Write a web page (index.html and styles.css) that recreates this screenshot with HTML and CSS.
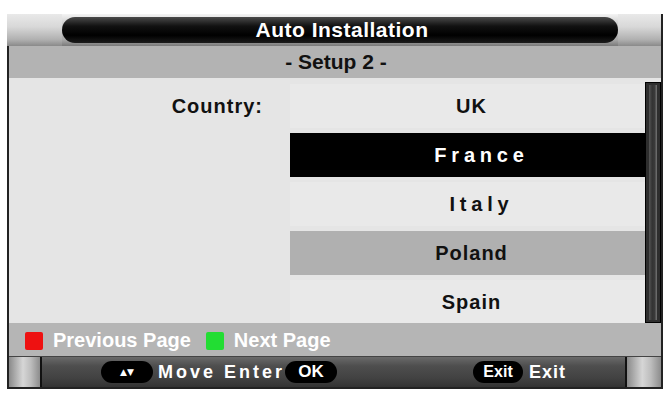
FILE: index.html
```html
<!DOCTYPE html>
<html>
<head>
<meta charset="utf-8">
<link rel="stylesheet" href="styles.css">
</head>
<body>
<div class="tv">
  <div class="titlebar">
    <div class="cap cap-left"></div>
    <div class="pill-title">Auto Installation</div>
    <div class="cap cap-right"></div>
  </div>
  <div class="frame">
    <div class="subtitle">- Setup 2 -</div>
    <div class="content">
      <div class="label">Country:</div>
      <div class="options">
        <div class="opt">UK</div>
        <div class="opt sel wide">France</div>
        <div class="opt wide">Italy</div>
        <div class="opt hl">Poland</div>
        <div class="opt">Spain</div>
      </div>
      <div class="scrollbar"><div class="thumb"></div></div>
    </div>
    <div class="legend">
      <span class="sq red"></span><span class="ltext">Previous Page</span>
      <span class="sq green"></span><span class="ltext">Next Page</span>
    </div>
    <div class="bottombar">
      <div class="bsq"></div>
      <div class="bmid">
        <span class="key arrows">▲▼</span>
        <span class="btext spaced">Move Enter</span>
        <span class="key ok">OK</span>
        <span class="spacer"></span>
        <span class="key exitkey">Exit</span>
        <span class="btext">Exit</span>
      </div>
      <div class="bsq right"></div>
    </div>
  </div>
</div>
</body>
</html>
```
FILE: styles.css
```css
html, body {
  margin: 0;
  padding: 0;
  background: #ffffff;
  width: 667px;
  height: 393px;
  overflow: hidden;
  font-family: "Liberation Sans", Arial, sans-serif;
  font-weight: bold;
}

.tv {
  margin: 14px 0 0 7px;
  width: 656px;
}

.titlebar {
  height: 32px;
  display: flex;
  align-items: center;
  background: linear-gradient(to bottom, #f4f4f4 0%, #cfcfcf 30%, #a8a8a8 80%, #7a7a7a 100%);
  border-right: 2px solid #222;
  box-sizing: border-box;
}

.cap {
  height: 32px;
  background: linear-gradient(to bottom, #e9e9e9 0%, #d8d8d8 40%, #b0b0b0 80%, #8a8a8a 100%);
}
.cap-left { width: 55px; }
.cap-right { width: 43px; }

.pill-title {
  flex: 1;
  height: 26px;
  border-radius: 13px;
  background: linear-gradient(to bottom, #4a4a4a 0%, #111 35%, #000 70%, #1c1c1c 100%);
  color: #fff;
  font-size: 21px;
  letter-spacing: 0.5px;
  display: flex;
  align-items: center;
  justify-content: center;
  padding-left: 4px;
}

.frame {
  border-left: 2px solid #222;
  border-right: 2px solid #222;
}

.subtitle {
  height: 32px;
  background: #b3b3b3;
  color: #111;
  font-size: 21px;
  display: flex;
  align-items: center;
  justify-content: center;
  padding-left: 2px;
}

.content {
  height: 245px;
  overflow: hidden;
  background: #e5e5e5;
  display: grid;
  grid-template-columns: 281px 355px 16px;
  padding-top: 4px;
  box-sizing: border-box;
}

.label {
  margin-top: 2px;
  height: 44px;
  display: flex;
  align-items: center;
  justify-content: flex-end;
  padding-right: 27px;
  font-size: 20px;
  letter-spacing: 1px;
  color: #111;
}

.options {
  display: flex;
  flex-direction: column;
  gap: 5px;
  padding-top: 2px;
}

.opt {
  height: 44px;
  flex: none;
  display: flex;
  align-items: center;
  justify-content: center;
  padding-left: 8px;
  font-size: 20px;
  letter-spacing: 1px;
  color: #111;
  background: #e9e9e9;
}
.opt.wide { letter-spacing: 4.8px; padding-left: 28px; }
.opt.sel { background: #000; color: #fff; }
.opt.hl { background: #b0b0b0; }

.scrollbar {
  height: 241px;
  background: #2e2e2e;
  border: 1px solid #000;
  box-sizing: border-box;
  padding: 2px 3px;
}
.thumb {
  height: 100%;
  background: linear-gradient(to right, #555 0%, #333 40%, #3a3a3a 70%, #777 100%);
}

.legend {
  height: 34px;
  background: #b5b5b5;
  display: flex;
  align-items: center;
  padding-left: 16px;
  border-bottom: 1px solid #444;
  box-sizing: border-box;
}
.sq {
  width: 18px;
  height: 18px;
  border-radius: 2px;
  margin-top: 2px;
}
.red { background: #ee1111; }
.green { background: #22dd33; margin-left: 15px; }
.ltext {
  color: #fff;
  font-size: 20px;
  margin-left: 10px;
  margin-top: 2px;
}

.bottombar {
  height: 30px;
  display: flex;
  background: linear-gradient(to bottom, #6a6a6a 0%, #4e4e4e 30%, #424242 70%, #333 100%);
  border-bottom: 2px solid #222;
}
.bsq {
  width: 31px;
  background: linear-gradient(to right, #8a8a8a 0%, #d6d6d6 45%, #bdbdbd 70%, #8c8c8c 100%);
  border-right: 2px solid #111;
}
.bsq.right {
  width: 34px;
  border-right: none;
  border-left: 2px solid #111;
}
.bmid {
  flex: 1;
  display: flex;
  align-items: center;
  padding-left: 59px;
}
.key {
  height: 22px;
  border-radius: 11px;
  background: #000;
  color: #fff;
  display: flex;
  align-items: center;
  justify-content: center;
  font-size: 16px;
}
.arrows {
  width: 52px;
  font-family: "DejaVu Sans", sans-serif;
  font-size: 9px;
  letter-spacing: 0;
}
.ok { width: 52px; margin-left: 0; font-size: 17px; }
.exitkey { width: 50px; }
.spacer { width: 136px; }
.btext {
  color: #fff;
  font-size: 18px;
  margin-left: 6px;
  letter-spacing: 1px;
}
.btext.spaced { letter-spacing: 3px; margin-left: 5px; }
```
